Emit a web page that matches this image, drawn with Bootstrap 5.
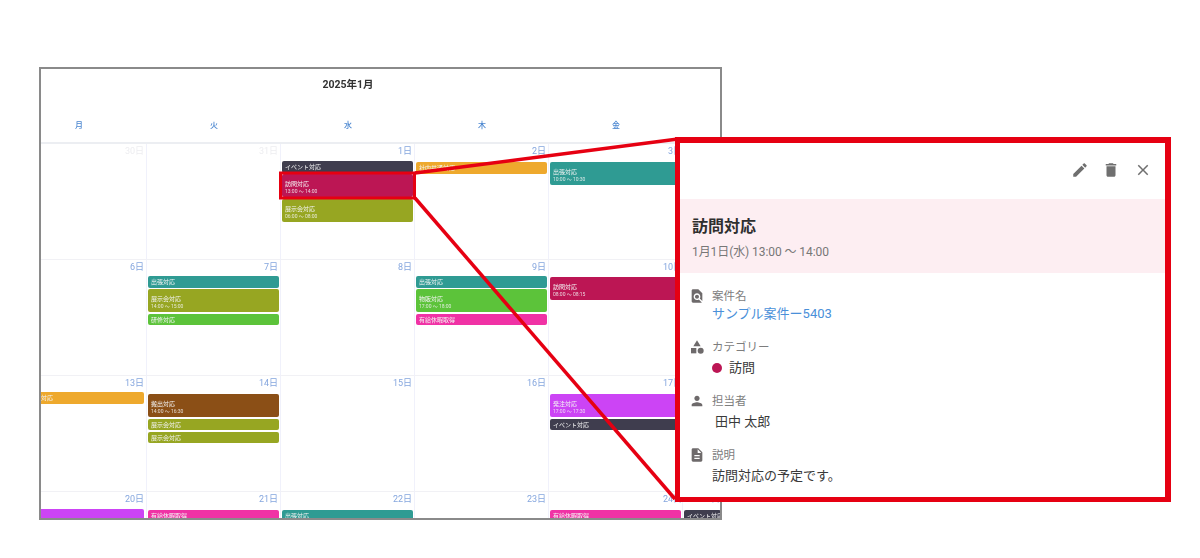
<!DOCTYPE html>
<html lang="ja">
<head>
<meta charset="utf-8">
<title>カレンダー</title>
<link href="https://cdn.jsdelivr.net/npm/bootstrap@5.3.0/dist/css/bootstrap.min.css" rel="stylesheet">
<style>
html,body{height:558px;overflow:hidden;background:#fff}
body{font-family:Roboto,"Noto Sans CJK JP",sans-serif;color:#333}
.stage{height:558px;padding:67px 0 0 39px}
.cal-frame{width:683px;height:453px;border:2px solid #8a8a8a;overflow:hidden;background:#fff;filter:blur(.35px)}
.cal-inner{width:680px}
.cal-cols{display:grid;grid-template-columns:106px repeat(4,134px) 39px}
.cal-title{height:30px;grid-column:3;font-size:10.5px;font-weight:700;color:#333;line-height:32px;white-space:nowrap;text-align:center}
.cal-head{height:45px;border-bottom:2px solid #eceef2}
.dow{font-size:8px;font-weight:500;color:#4a86d0;line-height:53px}
.dow-first{padding-right:30px}
.cal-cell{height:116px;border-right:1px solid #f0f1fb;border-bottom:1px solid #f1f1f5;padding:0 1px;white-space:nowrap}
.cal-cell:nth-child(6n){border-right:0}
.cal-date{font-size:9px;line-height:13px;padding:1px 1px 0 0;height:16px;color:#85a6de;text-align:right}
.cal-cell:nth-child(6n-1) .cal-date{margin-right:-2px}
.cal-date.past{color:#ededf0}
.ev-list{display:flex;flex-direction:column;gap:1.5px}
.st1{margin-top:1px}.st2{margin-top:2px}
.ev{height:11.5px;border-radius:2px;color:#f4f4f4;font-size:6px;line-height:11.5px;padding:0 3px;overflow:hidden}
.ev.tall{height:23px;line-height:9px;padding-top:5px}
.ev small{display:block;font-size:5px;line-height:7px;opacity:.85}
.ev.bleed{margin-left:-28px;margin-right:1px;text-align:left}
.c-dark{background:#3f3d4e}.c-crim{background:#bc1654}.c-oli{background:#97a622}.c-ora{background:#eea92d}
.c-teal{background:#2f9b93}.c-gre{background:#5cc33a}.c-pink{background:#f032a5}.c-pur{background:#cc44f5}.c-bro{background:#8b4f16}
.overlay-lines{position:absolute;left:0;top:0;width:1200px;height:558px;pointer-events:none}
.detail{position:absolute;left:675px;top:137px;width:496px;height:365px;background:#fff;border:solid #e60012;border-width:6px 6px 5px 5px}
.detail-bar{height:56px;padding:0 13px 2px 0;gap:14px}
.detail-bar svg{width:18px;height:18px;fill:#6f6f6f}
.detail-bar svg:first-child{margin-right:-1px}
.detail-head{height:74px;background:#fdeef2;padding:17px 0 0 12px}
.detail-title{font-size:16px;font-weight:700;line-height:22px;color:#2f2f2f;margin:0}
.detail-sub{font-size:12px;line-height:18px;margin-top:5px;color:#777;letter-spacing:-.08px}
.detail-body{padding:14px 0 0 9px}
.info{margin-bottom:13px}
.info-first{margin-bottom:14px}
.info-label{font-size:11.5px;line-height:18px;color:#7d7d7d;gap:7px}
.info-label svg{width:16px;height:16px;fill:#6e6a6b;flex:none}
.info-val{font-size:13px;line-height:22px;margin:1px 0 0 23px;color:#3a3a3a}
.info-first .info-val{line-height:20px;margin-top:-1px}
.info-link{color:#4a90d9;text-decoration:none}
.cat-dot{display:inline-block;width:10px;height:10px;border-radius:50%;background:#bc1654;margin-right:7px}
.val-indent{padding-left:3px}
</style>
</head>
<body>
<div class="stage position-relative">
  <div class="cal-frame">
    <div class="cal-inner">
      <div class="cal-cols"><div class="cal-title">2025年1月</div></div>
      <div class="cal-cols cal-head text-center">
        <div class="dow dow-first">月</div><div class="dow">火</div><div class="dow">水</div><div class="dow">木</div><div class="dow">金</div><div class="dow"></div>
      </div>
      <div class="cal-cols">
        <div class="cal-cell"><div class="cal-date past">30日</div></div>
        <div class="cal-cell"><div class="cal-date past">31日</div></div>
        <div class="cal-cell"><div class="cal-date">1日</div><div class="ev-list st1">
          <div class="ev c-dark">イベント対応</div>
          <div class="ev tall c-crim">訪問対応<small>13:00 〜 14:00</small></div>
          <div class="ev tall c-oli">展示会対応<small>06:00 〜 08:00</small></div></div></div>
        <div class="cal-cell"><div class="cal-date">2日</div><div class="ev-list st2"><div class="ev c-ora">社内共通対応</div></div></div>
        <div class="cal-cell"><div class="cal-date">3日</div><div class="ev-list st2"><div class="ev tall c-teal">出張対応<small>10:00 〜 10:30</small></div></div></div>
        <div class="cal-cell"><div class="cal-date">4日</div></div>

        <div class="cal-cell"><div class="cal-date">6日</div></div>
        <div class="cal-cell"><div class="cal-date">7日</div><div class="ev-list">
          <div class="ev c-teal">出張対応</div>
          <div class="ev tall c-oli">展示会対応<small>14:00 〜 15:00</small></div>
          <div class="ev c-gre">研修対応</div></div></div>
        <div class="cal-cell"><div class="cal-date">8日</div></div>
        <div class="cal-cell"><div class="cal-date">9日</div><div class="ev-list">
          <div class="ev c-teal">出張対応</div>
          <div class="ev tall c-gre">物販対応<small>17:00 〜 18:00</small></div>
          <div class="ev c-pink">有給休暇取得</div></div></div>
        <div class="cal-cell"><div class="cal-date">10日</div><div class="ev-list st1"><div class="ev tall c-crim">訪問対応<small>08:00 〜 08:15</small></div></div></div>
        <div class="cal-cell"><div class="cal-date">11日</div></div>

        <div class="cal-cell"><div class="cal-date">13日</div><div class="ev-list"><div class="ev bleed c-ora">社内共通対応</div></div></div>
        <div class="cal-cell"><div class="cal-date">14日</div><div class="ev-list st2">
          <div class="ev tall c-bro">搬出対応<small>14:00 〜 16:30</small></div>
          <div class="ev c-oli">展示会対応</div>
          <div class="ev c-oli">展示会対応</div></div></div>
        <div class="cal-cell"><div class="cal-date">15日</div></div>
        <div class="cal-cell"><div class="cal-date">16日</div></div>
        <div class="cal-cell"><div class="cal-date">17日</div><div class="ev-list st2">
          <div class="ev tall c-pur">発注対応<small>17:00 〜 17:30</small></div>
          <div class="ev c-dark">イベント対応</div></div></div>
        <div class="cal-cell"><div class="cal-date">18日</div></div>

        <div class="cal-cell"><div class="cal-date">20日</div><div class="ev-list st1"><div class="ev bleed c-pur">発注対応</div></div></div>
        <div class="cal-cell"><div class="cal-date">21日</div><div class="ev-list st2"><div class="ev c-pink">有給休暇取得</div></div></div>
        <div class="cal-cell"><div class="cal-date">22日</div><div class="ev-list st2"><div class="ev c-teal">出張対応</div></div></div>
        <div class="cal-cell"><div class="cal-date">23日</div></div>
        <div class="cal-cell"><div class="cal-date">24日</div><div class="ev-list st2"><div class="ev c-pink">有給休暇取得</div></div></div>
        <div class="cal-cell"><div class="cal-date">25日</div><div class="ev-list st2"><div class="ev c-dark">イベント対応</div></div></div>
      </div>
    </div>
  </div>

  <svg class="overlay-lines" viewBox="0 0 1200 558" aria-hidden="true">
    <rect x="280.5" y="173" width="134" height="25" fill="none" stroke="#e60012" stroke-width="3"/>
    <line x1="415" y1="173" x2="678" y2="139" stroke="#e60012" stroke-width="3.5"/>
    <line x1="415" y1="198" x2="675" y2="499" stroke="#e60012" stroke-width="3.5"/>
  </svg>

  <section class="detail">
    <div class="detail-bar d-flex justify-content-end align-items-center">
      <svg viewBox="0 0 24 24"><path d="M3 17.25V21h3.75L17.81 9.94l-3.75-3.75L3 17.25zM20.71 7.04c.39-.39.39-1.02 0-1.41l-2.34-2.34c-.39-.39-1.02-.39-1.41 0l-1.83 1.83 3.75 3.75 1.83-1.83z"/></svg>
      <svg viewBox="0 0 24 24"><path d="M6 19c0 1.1.9 2 2 2h8c1.1 0 2-.9 2-2V7H6v12zM19 4h-3.5l-1-1h-5l-1 1H5v2h14V4z"/></svg>
      <svg viewBox="0 0 24 24"><path d="M19 6.41L17.59 5 12 10.59 6.41 5 5 6.41 10.59 12 5 17.59 6.41 19 12 13.41 17.59 19 19 17.59 13.41 12z"/></svg>
    </div>
    <div class="detail-head">
      <h2 class="detail-title">訪問対応</h2>
      <div class="detail-sub">1月1日(水) 13:00 〜 14:00</div>
    </div>
    <div class="detail-body">
      <div class="info-first">
        <div class="info-label d-flex align-items-center"><svg viewBox="0 0 24 24"><path d="M20 19.59V8l-6-6H6c-1.1 0-1.99.9-1.99 2L4 20c0 1.1.89 2 1.99 2H18c.45 0 .85-.15 1.19-.4l-4.43-4.43c-.8.52-1.74.83-2.76.83-2.76 0-5-2.24-5-5s2.24-5 5-5 5 2.24 5 5c0 1.02-.31 1.96-.83 2.75L20 19.59zM9 13c0 1.66 1.34 3 3 3s3-1.34 3-3-1.34-3-3-3-3 1.34-3 3z"/></svg>案件名</div>
        <div class="info-val"><a class="info-link" href="#">サンプル案件ー5403</a></div>
      </div>
      <div class="info">
        <div class="info-label d-flex align-items-center"><svg viewBox="0 0 24 24"><path d="M12 2l-5.5 9h11z"/><circle cx="17.5" cy="17.5" r="4.5"/><rect x="3" y="13.5" width="8" height="8"/></svg>カテゴリー</div>
        <div class="info-val d-flex align-items-center"><span class="cat-dot"></span>訪問</div>
      </div>
      <div class="info">
        <div class="info-label d-flex align-items-center"><svg viewBox="0 0 24 24"><path d="M12 12c2.21 0 4-1.79 4-4s-1.79-4-4-4-4 1.79-4 4 1.79 4 4 4zm0 2c-2.67 0-8 1.34-8 4v2h16v-2c0-2.66-5.33-4-8-4z"/></svg>担当者</div>
        <div class="info-val val-indent">田中 太郎</div>
      </div>
      <div class="info">
        <div class="info-label d-flex align-items-center"><svg viewBox="0 0 24 24"><path d="M14 2H6c-1.1 0-1.99.9-1.99 2L4 20c0 1.1.89 2 1.99 2H18c1.1 0 2-.9 2-2V8l-6-6zm2 16H8v-2h8v2zm0-4H8v-2h8v2zm-3-5V3.5L18.5 9H13z"/></svg>説明</div>
        <div class="info-val">訪問対応の予定です。</div>
      </div>
    </div>
  </section>
</div>
<script src="https://cdn.jsdelivr.net/npm/bootstrap@5.3.0/dist/js/bootstrap.bundle.min.js"></script>
</body>
</html>
